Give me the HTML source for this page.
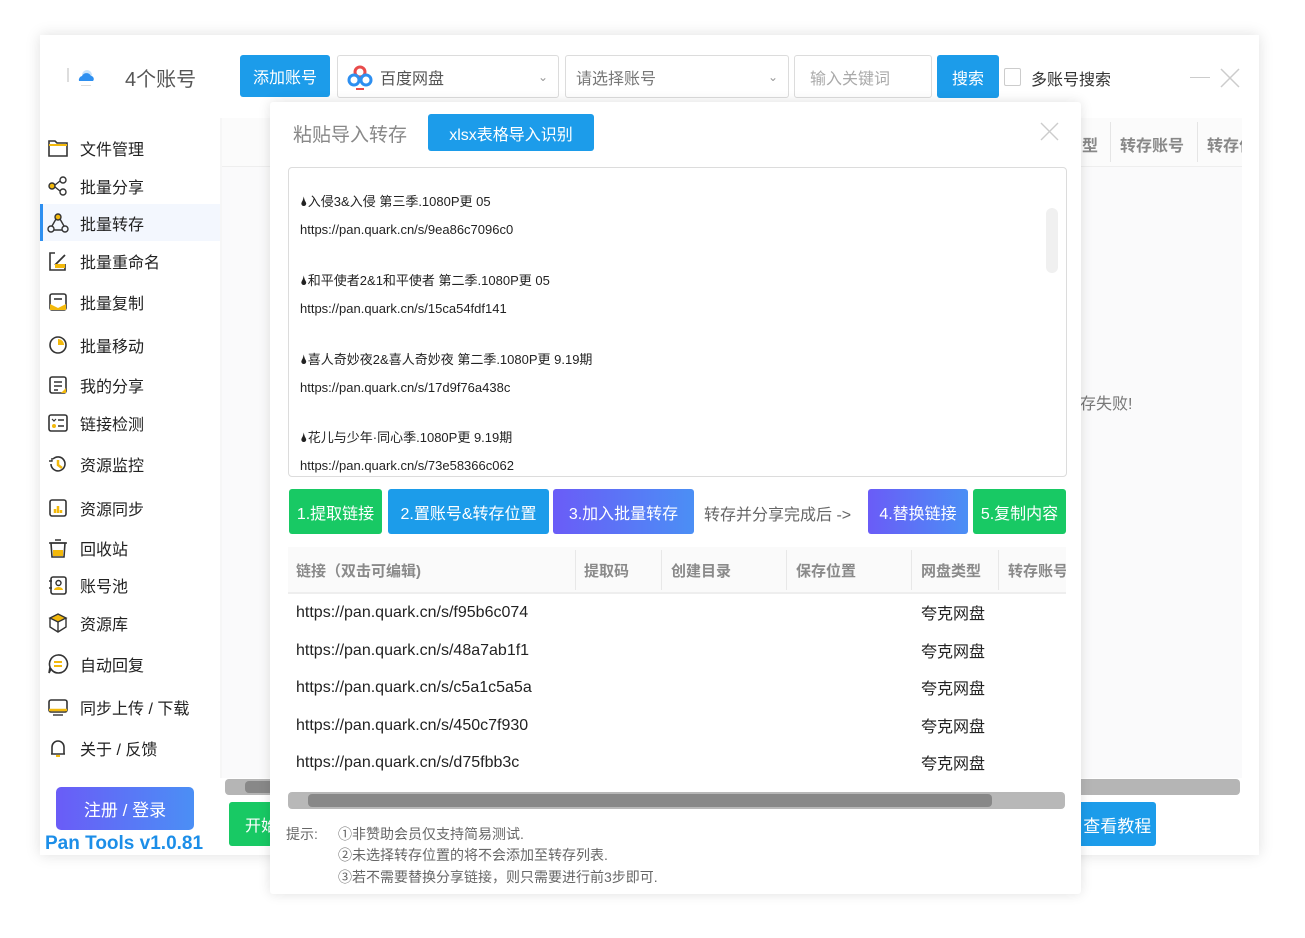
<!DOCTYPE html>
<html><head><meta charset="utf-8">
<style>
*{box-sizing:border-box;margin:0;padding:0}
body{width:1305px;height:938px;background:#fff;font-family:"Liberation Sans","Noto Sans CJK SC",sans-serif;position:relative;overflow:hidden;color:#333}
.abs{position:absolute}
.win{left:40px;top:35px;width:1219px;height:820px;background:#fff;box-shadow:0 0 14px rgba(0,0,0,.13)}
.btn{position:absolute;color:#fff;border-radius:3px;display:flex;align-items:center;justify-content:center;font-size:16px}
.inp{position:absolute;border:1px solid #dcdcdc;border-radius:3px;background:#fff;font-size:16px;color:#666;display:flex;align-items:center;padding-left:10px}
.nav{position:absolute;left:47px;display:flex;align-items:center;font-size:16px;color:#222}
.nav svg{width:22px;height:22px;margin-right:11px}
.modal{left:270px;top:102px;width:811px;height:792px;background:#fff;box-shadow:0 0 12px rgba(0,0,0,.12);border-radius:3px}
.t{position:absolute;font-size:13px;line-height:16px;color:#222;white-space:nowrap}
.th{position:absolute;top:560px;font-size:15px;color:#8a8a8a;font-weight:bold;white-space:nowrap}
.sep{position:absolute;top:550px;width:1px;height:40px;background:#e8e8e8}
.row{position:absolute;font-size:16px;line-height:20px;height:20px;color:#222;white-space:nowrap;font-family:"Liberation Sans",sans-serif}
.rowc{position:absolute;font-size:16px;line-height:20px;height:20px;color:#222;white-space:nowrap;font-family:"Noto Sans CJK SC",sans-serif}
.tip{position:absolute;font-size:14px;color:#666;white-space:nowrap}
</style></head><body>
<div class="abs win"></div>
<!-- logo -->
<div class="abs" style="left:67px;top:68px;width:2px;height:14px;background:#ddd"></div>
<svg class="abs" style="left:75px;top:66px" width="22" height="22" viewBox="0 0 22 22"><circle cx="12" cy="9" r="5" fill="#c9e3fb"/><path d="M4 15a4 4 0 0 1 3-5 5 5 0 0 1 9 0 3 3 0 0 1 2 5z" fill="#2d8ff0"/><rect x="6" y="19" width="10" height="1" fill="#ddd"/></svg>
<div class="abs" style="left:125px;top:63px;font-size:20px;color:#555">4个账号</div>
<div class="btn" style="left:240px;top:55px;width:90px;height:42px;background:#1c9cea">添加账号</div>
<div class="inp" style="left:337px;top:55px;width:222px;height:43px;padding-left:8px">
<svg width="28" height="28" viewBox="0 0 28 28" style="margin-right:6px"><circle cx="14" cy="9" r="5" fill="none" stroke="#e84b4b" stroke-width="3"/><circle cx="8" cy="17" r="5" fill="none" stroke="#2d8ff0" stroke-width="3"/><circle cx="20" cy="17" r="5" fill="none" stroke="#2d8ff0" stroke-width="3"/><rect x="10" y="25" width="8" height="2" fill="#e84b4b"/></svg>
<span style="color:#555">百度网盘</span><span style="position:absolute;right:10px;color:#999;font-size:12px">&#8964;</span></div>
<div class="inp" style="left:565px;top:55px;width:224px;height:43px;color:#777">请选择账号<span style="position:absolute;right:10px;color:#999;font-size:12px">&#8964;</span></div>
<div class="inp" style="left:794px;top:55px;width:138px;height:43px;color:#aaa;padding-left:15px">输入关键词</div>
<div class="btn" style="left:937px;top:55px;width:62px;height:43px;background:#1c9cea">搜索</div>
<div class="abs" style="left:1004px;top:68px;width:17px;height:18px;border:1px solid #ccc;border-radius:2px"></div>
<div class="abs" style="left:1031px;top:66px;font-size:16px;color:#333">多账号搜索</div>
<div class="abs" style="left:1190px;top:77px;width:20px;height:1px;background:#ccc"></div>
<svg class="abs" style="left:1220px;top:68px" width="20" height="20"><path d="M1 1L19 19M19 1L1 19" stroke="#ccc" stroke-width="1.5"/></svg>

<!-- sidebar -->
<div class="abs" style="left:40px;top:204px;width:180px;height:37px;background:#f3f7fe;border-left:3px solid #2d8ff0"></div>
<div class="abs" style="left:220px;top:118px;width:2px;height:660px;background:#f6f6f6"></div>
<div class="nav" style="top:136px"><svg viewBox="0 0 22 22"><path d="M2 4h6l2 2h10v13H2z" fill="none" stroke="#333" stroke-width="1.6"/><path d="M2 8h18" stroke="#f3b90c" stroke-width="2"/></svg>文件管理</div>
<div class="nav" style="top:174px"><svg viewBox="0 0 22 22"><circle cx="5" cy="11" r="3" fill="#f3b90c" stroke="#333" stroke-width="1.4"/><circle cx="16" cy="5" r="3" fill="none" stroke="#333" stroke-width="1.4"/><circle cx="16" cy="17" r="3" fill="none" stroke="#333" stroke-width="1.4"/><path d="M8 10l5-4M8 12l5 4" stroke="#333" stroke-width="1.4"/></svg>批量分享</div>
<div class="nav" style="top:211px"><svg viewBox="0 0 22 22"><circle cx="11" cy="5" r="3" fill="#f3b90c" stroke="#333" stroke-width="1.4"/><circle cx="4" cy="17" r="3" fill="none" stroke="#333" stroke-width="1.4"/><circle cx="18" cy="17" r="3" fill="none" stroke="#333" stroke-width="1.4"/><path d="M9 7l-4 7M13 7l4 7M7 18h8" stroke="#333" stroke-width="1.4"/></svg>批量转存</div>
<div class="nav" style="top:249px"><svg viewBox="0 0 22 22"><path d="M8 3H3v17h15v-6" fill="none" stroke="#333" stroke-width="1.6"/><path d="M8 15l10-10" stroke="#333" stroke-width="1.8"/><rect x="8" y="14" width="10" height="4" fill="#f3b90c"/></svg>批量重命名</div>
<div class="nav" style="top:290px"><svg viewBox="0 0 22 22"><rect x="3" y="3" width="16" height="16" rx="2" fill="none" stroke="#333" stroke-width="1.6"/><path d="M3 13l8 4 8-4v6H3z" fill="#f3b90c"/><path d="M7 8h8" stroke="#333" stroke-width="1.6"/></svg>批量复制</div>
<div class="nav" style="top:333px"><svg viewBox="0 0 22 22"><circle cx="11" cy="11" r="8" fill="none" stroke="#333" stroke-width="1.6"/><path d="M11 11V5a6 6 0 0 1 6 6z" fill="#f3b90c"/></svg>批量移动</div>
<div class="nav" style="top:373px"><svg viewBox="0 0 22 22"><rect x="3" y="3" width="16" height="16" rx="2" fill="none" stroke="#333" stroke-width="1.6"/><path d="M7 8h8M7 12h8M7 16h4" stroke="#333" stroke-width="1.4"/><path d="M14 19l5-5v5z" fill="#f3b90c"/></svg>我的分享</div>
<div class="nav" style="top:411px"><svg viewBox="0 0 22 22"><rect x="2" y="3" width="18" height="16" rx="2" fill="none" stroke="#333" stroke-width="1.6"/><path d="M11 8h6M11 14h6" stroke="#333" stroke-width="1.4"/><circle cx="7" cy="14" r="2" fill="#f3b90c"/><path d="M5 7l2 2 2-2" stroke="#333" stroke-width="1.2" fill="none"/></svg>链接检测</div>
<div class="nav" style="top:452px"><svg viewBox="0 0 22 22"><path d="M4 11a7 7 0 1 0 2-5" fill="none" stroke="#333" stroke-width="1.6"/><path d="M11 7v5l4 3" stroke="#f3b90c" stroke-width="2.5" fill="none"/><path d="M2 8l3 0 0-3" stroke="#333" stroke-width="1.4" fill="none"/></svg>资源监控</div>
<div class="nav" style="top:496px"><svg viewBox="0 0 22 22"><rect x="3" y="3" width="16" height="16" rx="2" fill="none" stroke="#333" stroke-width="1.6"/><path d="M8 16v-4M11 16v-7M14 16v-3" stroke="#f3b90c" stroke-width="2.5"/></svg>资源同步</div>
<div class="nav" style="top:536px"><svg viewBox="0 0 22 22"><path d="M4 6h14l-1 14H5z" fill="none" stroke="#333" stroke-width="1.6"/><rect x="6" y="13" width="10" height="6" fill="#f3b90c"/><path d="M2 6h18M8 3h6" stroke="#333" stroke-width="1.6"/></svg>回收站</div>
<div class="nav" style="top:573px"><svg viewBox="0 0 22 22"><rect x="4" y="3" width="15" height="17" rx="2" fill="none" stroke="#333" stroke-width="1.6"/><circle cx="11.5" cy="9" r="2.5" fill="none" stroke="#333" stroke-width="1.4"/><path d="M7 16a4.5 3 0 0 1 9 0z" fill="#f3b90c"/><path d="M2 7h3M2 14h3" stroke="#333" stroke-width="1.4"/></svg>账号池</div>
<div class="nav" style="top:611px"><svg viewBox="0 0 22 22"><path d="M11 2l8 4-8 4-8-4z" fill="#f3b90c" stroke="#333" stroke-width="1.4"/><path d="M3 6v9l8 5 8-5V6M11 10v10" fill="none" stroke="#333" stroke-width="1.4"/></svg>资源库</div>
<div class="nav" style="top:652px"><svg viewBox="0 0 22 22"><path d="M11 2a9 9 0 1 1-7 14l-2 4 1-6A9 9 0 0 1 11 2z" fill="none" stroke="#333" stroke-width="1.6"/><path d="M7 9h8M7 13h8" stroke="#f3b90c" stroke-width="2"/></svg>自动回复</div>
<div class="nav" style="top:695px"><svg viewBox="0 0 22 22"><rect x="2" y="4" width="18" height="12" rx="2" fill="none" stroke="#333" stroke-width="1.6"/><path d="M2 14h18" stroke="#f3b90c" stroke-width="2.5"/><path d="M6 19h10" stroke="#333" stroke-width="1.4"/></svg>同步上传 / 下载</div>
<div class="nav" style="top:736px"><svg viewBox="0 0 22 22"><path d="M5 17V10a6 6 0 0 1 12 0v7H4h14" fill="none" stroke="#333" stroke-width="1.6"/><path d="M9 19h4" stroke="#f3b90c" stroke-width="2"/></svg>关于 / 反馈</div>
<div class="btn" style="left:56px;top:787px;width:138px;height:43px;background:linear-gradient(90deg,#6a5cf7,#4b8ff5);border-radius:5px;font-size:17px">注册 / 登录</div>
<div class="abs" style="left:45px;top:833px;font-size:19px;font-weight:bold;color:#1c8ee8">Pan Tools v1.0.81</div>

<!-- content bg -->
<div class="abs" style="left:222px;top:118px;width:1020px;height:660px;background:#fafafb"></div>
<div class="abs" style="left:222px;top:118px;width:1020px;height:49px;background:#fbfbfb;border-bottom:1px solid #eee"></div>
<div class="abs" style="left:1110px;top:122px;width:1px;height:40px;background:#e5e5e5"></div>
<div class="abs" style="left:1197px;top:122px;width:1px;height:40px;background:#e5e5e5"></div>
<div class="abs" style="left:1082px;top:132px;font-size:16px;color:#888;font-weight:bold">型</div>
<div class="abs" style="left:1120px;top:132px;font-size:16px;color:#888;font-weight:bold">转存账号</div>
<div class="abs" style="left:1207px;top:132px;font-size:16px;color:#888;font-weight:bold;width:35px;overflow:hidden;white-space:nowrap">转存位置</div>
<div class="abs" style="left:1080px;top:390px;font-size:16px;color:#777">存失败!</div>
<div class="abs" style="left:225px;top:779px;width:1015px;height:16px;background:#b5b5b5;border-radius:4px"></div>
<div class="abs" style="left:245px;top:781px;width:40px;height:12px;background:#888;border-radius:4px"></div>
<div class="btn" style="left:229px;top:802px;width:60px;height:44px;background:#18c964;justify-content:flex-start;padding-left:16px">开始</div>
<div class="btn" style="left:1060px;top:802px;width:96px;height:44px;background:#1c9cea;font-size:17px;justify-content:flex-end;padding-right:0">查看教程&nbsp;</div>

<!-- modal -->
<div class="abs modal"></div>
<div class="abs" style="left:293px;top:120px;font-size:19px;color:#888">粘贴导入转存</div>
<div class="btn" style="left:428px;top:114px;width:166px;height:37px;background:#1c9cea">xlsx表格导入识别</div>
<svg class="abs" style="left:1040px;top:122px" width="19" height="19"><path d="M1 1L18 18M18 1L1 18" stroke="#ccc" stroke-width="1.4"/></svg>
<div class="abs" style="left:288px;top:167px;width:779px;height:310px;border:1px solid #dcdcdc;border-radius:4px;overflow:hidden">
<div class="abs" style="left:757px;top:40px;width:12px;height:65px;background:#f0f0f0;border-radius:6px"></div>
</div>
<div class="t" style="left:300px;top:194px">🌢入侵3&amp;入侵 第三季.1080P更 05</div>
<div class="t" style="left:300px;top:222px">https://pan.quark.cn/s/9ea86c7096c0</div>
<div class="t" style="left:300px;top:273px">🌢和平使者2&amp;1和平使者 第二季.1080P更 05</div>
<div class="t" style="left:300px;top:301px">https://pan.quark.cn/s/15ca54fdf141</div>
<div class="t" style="left:300px;top:352px">🌢喜人奇妙夜2&amp;喜人奇妙夜 第二季.1080P更 9.19期</div>
<div class="t" style="left:300px;top:380px">https://pan.quark.cn/s/17d9f76a438c</div>
<div class="t" style="left:300px;top:430px">🌢花儿与少年·同心季.1080P更 9.19期</div>
<div class="abs" style="left:289px;top:458px;width:700px;height:17px;overflow:hidden"><div class="t" style="left:11px;top:0">https://pan.quark.cn/s/73e58366c062</div></div>

<div class="btn" style="left:289px;top:489px;width:93px;height:45px;background:#18c964">1.提取链接</div>
<div class="btn" style="left:388px;top:489px;width:161px;height:45px;background:#1c9cea">2.置账号&amp;转存位置</div>
<div class="btn" style="left:553px;top:489px;width:141px;height:45px;background:linear-gradient(90deg,#6a5cf7,#4b8ff5)">3.加入批量转存</div>
<div class="abs" style="left:704px;top:501px;font-size:16px;color:#666">转存并分享完成后 -&gt;</div>
<div class="btn" style="left:868px;top:489px;width:100px;height:45px;background:linear-gradient(90deg,#6a5cf7,#4b8ff5)">4.替换链接</div>
<div class="btn" style="left:973px;top:489px;width:93px;height:45px;background:#18c964">5.复制内容</div>

<div class="abs" style="left:288px;top:547px;width:778px;height:47px;background:#fafafa;border-bottom:2px solid #eee"></div>
<div class="sep" style="left:575px"></div><div class="sep" style="left:661px"></div><div class="sep" style="left:786px"></div><div class="sep" style="left:911px"></div><div class="sep" style="left:998px"></div>
<div class="th" style="left:296px">链接（双击可编辑)</div>
<div class="th" style="left:584px">提取码</div>
<div class="th" style="left:671px">创建目录</div>
<div class="th" style="left:796px">保存位置</div>
<div class="th" style="left:921px">网盘类型</div>
<div class="abs" style="left:1008px;top:560px;width:58px;overflow:hidden"><span style="font-size:15px;color:#8a8a8a;font-weight:bold;white-space:nowrap">转存账号</span></div>
<div class="row" style="left:296px;top:603px">https://pan.quark.cn/s/f95b6c074</div><div class="rowc" style="left:921px;top:602px">夸克网盘</div>
<div class="row" style="left:296px;top:641px">https://pan.quark.cn/s/48a7ab1f1</div><div class="rowc" style="left:921px;top:640px">夸克网盘</div>
<div class="row" style="left:296px;top:678px">https://pan.quark.cn/s/c5a1c5a5a</div><div class="rowc" style="left:921px;top:677px">夸克网盘</div>
<div class="row" style="left:296px;top:716px">https://pan.quark.cn/s/450c7f930</div><div class="rowc" style="left:921px;top:715px">夸克网盘</div>
<div class="row" style="left:296px;top:753px">https://pan.quark.cn/s/d75fbb3c</div><div class="rowc" style="left:921px;top:752px">夸克网盘</div>
<div class="abs" style="left:288px;top:792px;width:777px;height:17px;background:#b8b8b8;border-radius:4px"></div>
<div class="abs" style="left:308px;top:794px;width:684px;height:13px;background:#888;border-radius:4px"></div>
<div class="tip" style="left:286px;top:824px">提示:</div>
<div class="tip" style="left:338px;top:824px">①非赞助会员仅支持简易测试.</div>
<div class="tip" style="left:338px;top:845px">②未选择转存位置的将不会添加至转存列表.</div>
<div class="tip" style="left:338px;top:867px">③若不需要替换分享链接，则只需要进行前3步即可.</div>
</body></html>
